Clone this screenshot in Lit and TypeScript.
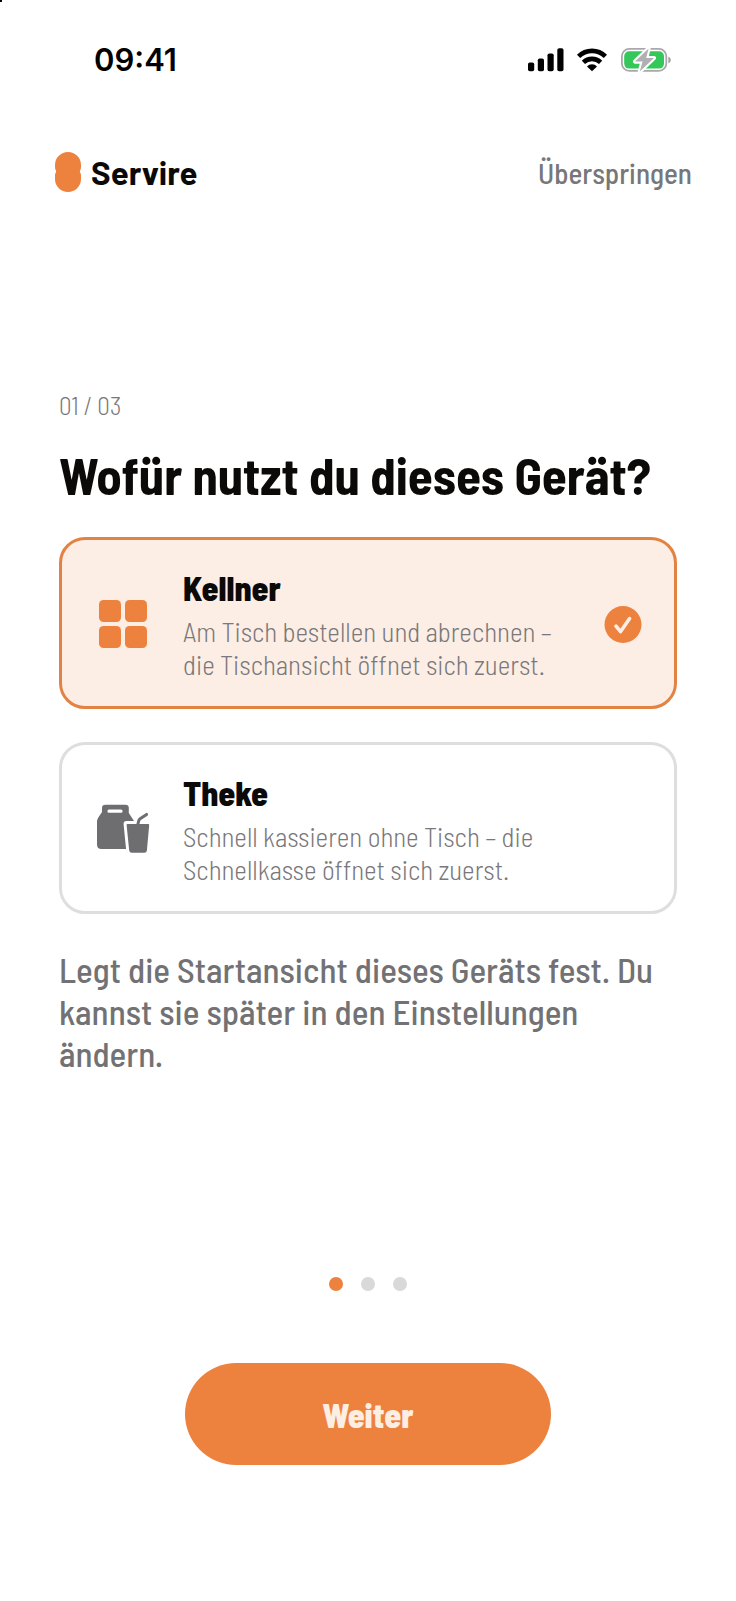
import { LitElement, html, css, svg, nothing } from "lit";
import { customElement, property, state } from "lit/decorators.js";
import { classMap } from "lit/directives/class-map.js";

type Mode = "kellner" | "theke";

interface Option {
  id: Mode;
  title: string;
  text: string;
}

const OPTIONS: Option[] = [
  {
    id: "kellner",
    title: "Kellner",
    text: "Am Tisch bestellen und abrechnen – die Tischansicht öffnet sich zuerst.",
  },
  {
    id: "theke",
    title: "Theke",
    text: "Schnell kassieren ohne Tisch – die Schnellkasse öffnet sich zuerst.",
  },
];

const tablesIcon = svg`
  <rect x="3" y="2" width="22" height="22" rx="4.5" />
  <rect x="29" y="2" width="22" height="22" rx="4.5" />
  <rect x="3" y="28" width="22" height="22" rx="4.5" />
  <rect x="29" y="28" width="22" height="22" rx="4.5" />`;

const takeawayIcon = svg`
  <path fill-rule="evenodd" d="M9.5 1.7H29.5Q32.8 1.7 32.8 5V10L38 18Q38.6 19 38.6 21V46H5.5Q1 46 1 41.5V19Q1 16.5 2.3 14.5L6 9V5Q6 1.7 9.5 1.7ZM13 6.6a1.5 1.5 0 0 0 0 3.2H25a1.5 1.5 0 0 0 0-3.2Z" />
  <path class="gap" d="M30.6 21H53.2L50.9 47.4Q50.7 49.7 48.4 49.7H35.8Q33.5 49.7 33.2 47.4Z" />
  <path d="M31.6 21H52.2Q53.3 21 53.2 22.1L50.9 47.4Q50.7 49.7 48.4 49.7H35.8Q33.5 49.7 33.2 47.4L30.6 22.1Q30.5 21 31.6 21Z" />
  <path class="straw" d="M41.8 21.5L42.8 17.6Q43.1 16.5 44.1 15.8L50.6 11.4" />`;

/** iOS-style status bar with time, signal, Wi-Fi and charging battery. */
@customElement("status-bar")
export class StatusBar extends LitElement {
  static styles = css`
    :host {
      display: flex;
      justify-content: space-between;
      align-items: center;
      height: 24px;
      padding: 48px 65px 0 94px;
      color: #000;
    }
    .time {
      font: 600 31px/24px Inter, sans-serif;
    }
    .icons {
      display: flex;
      align-items: center;
      gap: 14px;
    }
    svg {
      display: block;
      overflow: visible;
    }
  `;

  render() {
    return html`
      <span class="time">09:41</span>
      <span class="icons">
        <svg width="35" height="24" viewBox="0 0 35 24" aria-label="Mobilfunk">
          <rect x="0" y="14.5" width="6.2" height="8.7" rx="1.8" />
          <rect x="9.8" y="10.4" width="6.2" height="12.8" rx="1.8" />
          <rect x="19.5" y="5.5" width="6.2" height="17.7" rx="1.8" />
          <rect x="29.3" y="0.3" width="6.2" height="22.9" rx="1.8" />
        </svg>
        <svg width="30" height="24" viewBox="0 0 30 24" aria-label="WLAN">
          <g fill="none" stroke="#000" stroke-width="4.6">
            <path d="M1.6 8.4A19 19 0 0 1 28.4 8.4" />
            <path d="M6.4 14.3A12.4 12.4 0 0 1 23.6 14.3" />
          </g>
          <path d="M15 23.2L10 18.4A7 7 0 0 1 20 18.4Z" />
        </svg>
        <svg width="50" height="24" viewBox="0 0 50 24" aria-label="Batterie lädt">
          <rect x="0.9" y="0.9" width="44.4" height="22" rx="7.4" fill="#fff" stroke="#a9a9ab" stroke-width="1.8" />
          <rect x="3.2" y="3.2" width="39.8" height="17.4" rx="5" fill="#34c759" />
          <path d="M47.4 8.4Q49.8 9.4 49.8 11.9T47.4 15.4Z" fill="#a0a0a2" />
          <path d="M27.6 0.6L14 13.6H21.6L18.8 23.4L33 10H25.2Z" fill="#b4b4b6" stroke="#fff" stroke-width="4.2" stroke-linejoin="round" />
          <path d="M27.6 0.6L14 13.6H21.6L18.8 23.4L33 10H25.2Z" fill="#b0b0b2" />
        </svg>
      </span>
    `;
  }
}

/** Selectable card; the whole card is the label of its radio button. */
@customElement("mode-card")
export class ModeCard extends LitElement {
  static styles = css`
    :host {
      display: block;
    }
    .card {
      position: relative;
      display: flex;
      align-items: center;
      padding: 28px 32px 25px 34px;
      border: 3px solid #dedede;
      border-radius: 26px;
      background: #fff;
      cursor: pointer;
    }
    .card.selected {
      border-color: #e28344;
      background: #fceee5;
    }
    .card:focus-within {
      outline-offset: 3px;
    }
    .radio {
      position: absolute;
      inset: 0;
      margin: 0;
      opacity: 0;
      cursor: pointer;
    }
    .icon {
      flex: none;
      width: 54px;
      height: 54px;
      margin-right: 33px;
      fill: #6e6e71;
    }
    .selected .icon {
      fill: #ed823e;
    }
    .gap {
      fill: #fff;
      stroke: #fff;
      stroke-width: 6px;
      stroke-linejoin: round;
    }
    .straw {
      fill: none;
      stroke: #6e6e71;
      stroke-width: 3px;
      stroke-linecap: round;
    }
    .selected .gap {
      fill: #fceee5;
      stroke: #fceee5;
    }
    .selected .straw {
      stroke: #ed823e;
    }
    .copy {
      flex: 1;
      max-width: 384px;
      display: grid;
      gap: 7px;
    }
    .title {
      font-weight: 800;
      font-size: 34px;
      line-height: 40px;
      color: #0b0a09;
    }
    .text {
      font-weight: 300;
      font-size: 27px;
      line-height: 33px;
      color: #7a787a;
    }
    .check {
      flex: none;
      width: 38px;
      height: 38px;
      margin-left: auto;
    }
  `;

  @property({ attribute: false }) option!: Option;
  @property({ type: Boolean }) selected = false;

  private choose() {
    this.dispatchEvent(new CustomEvent("choose", { detail: this.option.id }));
  }

  render() {
    const { id, title, text } = this.option;
    return html`
      <label class=${classMap({ card: true, selected: this.selected })}>
        <input class="radio" type="radio" name="mode" .value=${id} .checked=${this.selected} @change=${this.choose} />
        <svg class="icon" viewBox="0 0 54 54" aria-hidden="true">
          ${id === "kellner" ? tablesIcon : takeawayIcon}
        </svg>
        <span class="copy">
          <span class="title">${title}</span>
          <span class="text">${text}</span>
        </span>
        ${this.selected
          ? html`<svg class="check" viewBox="0 0 38 38" aria-hidden="true">
              <circle cx="19" cy="18.5" r="18.5" fill="#ed823e" />
              <path d="M12 20.1L16.6 25.6L25.6 12.6" fill="none" stroke="#fceee5" stroke-width="3.6" stroke-linecap="round" stroke-linejoin="round" />
            </svg>`
          : nothing}
      </label>
    `;
  }
}

@customElement("app-root")
export class AppRoot extends LitElement {
  static styles = css`
    :host {
      position: relative;
      display: flex;
      flex-direction: column;
      box-sizing: border-box;
      min-height: 100vh;
      background: #fff;
      color: #0b0a09;
      font-family: "Barlow Semi Condensed", "Roboto Condensed", sans-serif;
    }
    .corner {
      position: absolute;
      top: 0;
      left: 0;
      width: 2px;
      height: 2px;
      background: #000;
    }
    button {
      border: 0;
      margin: 0;
      padding: 0;
      background: none;
      font: inherit;
      cursor: pointer;
    }
    .header {
      display: flex;
      justify-content: space-between;
      align-items: center;
      padding: 80px 44px 0 55px;
    }
    .brand {
      display: flex;
      align-items: center;
      gap: 10px;
      height: 40px;
    }
    .mark {
      fill: #ed823e;
    }
    .name {
      font: 700 33px/36px Barlow, sans-serif;
    }
    .skip {
      padding-top: 2px;
      font-weight: 500;
      font-size: 29px;
      line-height: 36px;
      color: #777779;
    }
    .main {
      flex: 1;
      display: flex;
      flex-direction: column;
      justify-content: center;
      padding: 0 59px 5px;
    }
    .step {
      margin: 0 0 25px;
      font-weight: 300;
      font-size: 25px;
      line-height: 30px;
      color: #7a787a;
    }
    .question {
      margin: 0 0 32px;
      font-weight: 700;
      font-size: 51px;
      line-height: 60px;
    }
    .options {
      display: grid;
      gap: 33px;
    }
    .note {
      margin: 34px 0 0;
      font-weight: 500;
      font-size: 35px;
      line-height: 42px;
      color: #727274;
    }
    .footer {
      display: flex;
      flex-direction: column;
      align-items: center;
      gap: 72px;
      padding-bottom: 136px;
    }
    .dots {
      display: flex;
      gap: 18px;
    }
    .dot {
      width: 14px;
      height: 14px;
      border-radius: 50%;
      background: #d9d9d9;
    }
    .dot.active {
      background: #ed823e;
    }
    .next {
      width: 366px;
      padding: 32px 0 30px;
      border-radius: 51px;
      background: #ed823e;
      color: #fdeee4;
      font-weight: 800;
      font-size: 34px;
      line-height: 40px;
    }
  `;

  @state() private mode: Mode = "kellner";

  render() {
    return html`
      <span class="corner"></span>
      <status-bar></status-bar>
      <header class="header">
        <div class="brand">
          <svg class="mark" width="26" height="40" viewBox="0 0 26 40" aria-hidden="true">
            <path d="M13 0A13 13 0 0 1 26 13V15Q26 17.6 24.8 19.6Q26 21.6 26 24V27A13 13 0 0 1 0 27V24Q0 21.6 1.2 19.6Q0 17.6 0 15V13A13 13 0 0 1 13 0Z" />
          </svg>
          <span class="name">Servire</span>
        </div>
        <button class="skip" type="button">Überspringen</button>
      </header>
      <main class="main">
        <p class="step">01 / 03</p>
        <h1 class="question" id="question">Wofür nutzt du dieses Gerät?</h1>
        <div class="options" role="radiogroup" aria-labelledby="question">
          ${OPTIONS.map(
            (o) => html`<mode-card
              .option=${o}
              .selected=${this.mode === o.id}
              @choose=${(e: CustomEvent<Mode>) => (this.mode = e.detail)}
            ></mode-card>`
          )}
        </div>
        <p class="note">Legt die Startansicht dieses Geräts fest. Du kannst sie später in den Einstellungen ändern.</p>
      </main>
      <footer class="footer">
        <div class="dots" aria-hidden="true">
          ${[0, 1, 2].map((i) => html`<span class=${classMap({ dot: true, active: i === 0 })}></span>`)}
        </div>
        <button class="next" type="button">Weiter</button>
      </footer>
    `;
  }
}
